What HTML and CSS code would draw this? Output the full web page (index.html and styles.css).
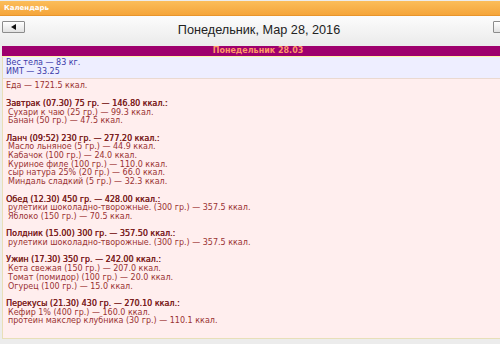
FILE: index.html
```html
<!DOCTYPE html>
<html lang="ru">
<head>
  <meta charset="UTF-8">
  <meta name="viewport" content="width=device-width, initial-scale=1.0">
  <title>Календарь</title>
  <link rel="stylesheet" href="styles.css">
</head>
<body>

  <div class="calendar">
    <div class="calendar-head">Календарь</div>

    <div class="calendar-nav">
      <button class="nav-button" aria-label="Назад"><span class="arrow arrow-left"></span></button>
      <h1 class="nav-title">Понедельник, Мар 28, 2016</h1>
      <button class="nav-button next" aria-label="Вперёд"><span class="arrow arrow-right"></span></button>
    </div>

    <div class="day">
      <div class="day-title">Понедельник 28.03</div>

      <div class="weight">
        <div>Вес тела — 83 кг.</div>
        <div>ИМТ — 33.25</div>
      </div>

      <div class="food">
        <div class="total">Еда — 1721.5 ккал.</div>

        <div class="meal">
          <div class="meal-name">Завтрак (07.30) 75 гр. — 146.80 ккал.:</div>
          <div class="item">Сухари к чаю (25 гр.) — 99.3 ккал.</div>
          <div class="item">Банан (50 гр.) — 47.5 ккал.</div>
        </div>

        <div class="meal">
          <div class="meal-name">Ланч (09:52) 230 гр. — 277.20 ккал.:</div>
          <div class="item">Масло льняное (5 гр.) — 44.9 ккал.</div>
          <div class="item">Кабачок (100 гр.) — 24.0 ккал.</div>
          <div class="item">Куриное филе (100 гр.) — 110.0 ккал.</div>
          <div class="item">сыр натура 25% (20 гр.) — 66.0 ккал.</div>
          <div class="item">Миндаль сладкий (5 гр.) — 32.3 ккал.</div>
        </div>

        <div class="meal">
          <div class="meal-name">Обед (12.30) 450 гр. — 428.00 ккал.:</div>
          <div class="item">рулетики шоколадно-творожные. (300 гр.) — 357.5 ккал.</div>
          <div class="item">Яблоко (150 гр.) — 70.5 ккал.</div>
        </div>

        <div class="meal">
          <div class="meal-name">Полдник (15.00) 300 гр. — 357.50 ккал.:</div>
          <div class="item">рулетики шоколадно-творожные. (300 гр.) — 357.5 ккал.</div>
        </div>

        <div class="meal">
          <div class="meal-name">Ужин (17.30) 350 гр. — 242.00 ккал.:</div>
          <div class="item">Кета свежая (150 гр.) — 207.0 ккал.</div>
          <div class="item">Томат (помидор) (100 гр.) — 20.0 ккал.</div>
          <div class="item">Огурец (100 гр.) — 15.0 ккал.</div>
        </div>

        <div class="meal">
          <div class="meal-name">Перекусы (21.30) 430 гр. — 270.10 ккал.:</div>
          <div class="item">Кефир 1% (400 гр.) — 160.0 ккал.</div>
          <div class="item">протеин макслер клубника (30 гр.) — 110.1 ккал.</div>
        </div>
      </div>
    </div>
  </div>

</body>
</html>
```

FILE: styles.css
```css
body {
  margin: 0;
  background-color: #ececec;
  font-family: "DejaVu Sans", sans-serif;
  overflow: hidden;
}

.calendar {
  width: 500px;
}

.calendar-head {
  height: 14px;
  margin-top: 1px;
  padding-left: 4px;
  background: linear-gradient(#fbbd5a, #f5a53a);
  border-bottom: 1px solid #e8952c;
  color: #fff;
  font-size: 7px;
  font-weight: bold;
  line-height: 14px;
}

.calendar-nav {
  display: flex;
  align-items: flex-start;
  height: 24px;
  padding: 5px 0 0 2px;
  background: linear-gradient(#fcfcfc, #ebebeb);
}

.nav-button {
  display: flex;
  align-items: center;
  justify-content: center;
  width: 23px;
  height: 12px;
  padding: 0;
  margin: 0;
  border: 1px solid #8c8c8c;
  border-radius: 1px;
  background: linear-gradient(#ffffff, #e2e2e2);
  flex: none;
}

.nav-button.next {
  margin-right: -16px;
}

.arrow {
  width: 0;
  height: 0;
  border-top: 3px solid transparent;
  border-bottom: 3px solid transparent;
}

.arrow-left {
  border-right: 5px solid #111;
}

.arrow-right {
  border-left: 5px solid #111;
}

.nav-title {
  flex: 1;
  margin: 1px 0 0 0;
  text-align: center;
  color: #222;
  font-family: "Liberation Sans", Arial, sans-serif;
  font-size: 12.7px;
  line-height: 16px;
  font-weight: normal;
}

.day {
  margin-left: 2px;
  background-color: #ffeeee;
  border-left: 1px solid #e8dfb8;
  border-bottom: 1px solid #e8dfb8;
}

.day-title {
  height: 10px;
  margin-top: 1px;
  margin-left: -1px;
  padding-left: 14px;
  background-color: #9e006d;
  border-bottom: 1px solid #fff3a8;
  color: #ff9966;
  font-size: 8px;
  font-weight: bold;
  line-height: 10px;
  text-align: center;
}

.weight {
  padding: 2px 3px 2px 3px;
  background-color: #eeeeff;
  border-bottom: 1px solid #ead9d0;
  color: #3a3aa8;
  font-size: 8px;
  line-height: 8.7px;
}

.food {
  height: 256px;
  padding: 3px 3px 0 3px;
  color: #9a3232;
  font-size: 8px;
  line-height: 8.7px;
}

.meal {
  margin-top: 8.7px;
}

.meal-name {
  color: #7a1c1c;
  text-shadow: 0.3px 0 0 #7a1c1c;
}

.item {
  padding-left: 2px;
}
```
